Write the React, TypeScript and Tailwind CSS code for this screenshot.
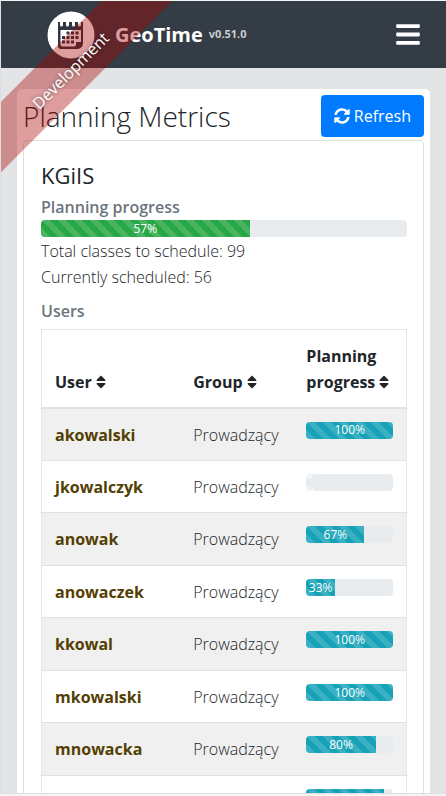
import { FaBars, FaSort, FaSyncAlt } from "react-icons/fa";

type User = { name: string; group: string; progress: number };

const users: User[] = [
  { name: "akowalski", group: "Prowadzący", progress: 100 },
  { name: "jkowalczyk", group: "Prowadzący", progress: 0 },
  { name: "anowak", group: "Prowadzący", progress: 67 },
  { name: "anowaczek", group: "Prowadzący", progress: 33 },
  { name: "kkowal", group: "Prowadzący", progress: 100 },
  { name: "mkowalski", group: "Prowadzący", progress: 100 },
  { name: "mnowacka", group: "Prowadzący", progress: 80 },
  { name: "", group: "", progress: 90 },
];

const stripes =
  "bg-[linear-gradient(45deg,rgba(255,255,255,.15)_25%,transparent_25%,transparent_50%,rgba(255,255,255,.15)_50%,rgba(255,255,255,.15)_75%,transparent_75%,transparent)] bg-[length:16px_16px]";

function Progress({ value, color, label }: { value: number; color: string; label: string }) {
  return (
    <div
      role="progressbar"
      aria-label={label}
      aria-valuenow={value}
      aria-valuemin={0}
      aria-valuemax={100}
      className="flex h-[17px] w-full overflow-hidden rounded bg-[#e9ecef] text-xs leading-[18px] font-normal text-white"
    >
      <div
        className={`flex flex-col justify-center text-center ${color} ${stripes}`}
        style={{ width: `${value}%` }}
      >
        {value === 0 ? (
          <span>
            0<br />%
          </span>
        ) : (
          <span>{value}%</span>
        )}
      </div>
    </div>
  );
}

function SortHeader({ children }: { children: string }) {
  return (
    <button type="button" className="text-left font-bold">
      {children} <FaSort className="inline h-4 w-[10px] align-[-2px]" />
    </button>
  );
}

function CalendarLogo() {
  return (
    <svg viewBox="0 0 48 48" className="h-12 w-12" aria-hidden="true">
      <circle cx="24" cy="24" r="23.5" fill="#fff" />
      <path
        fill="#303642"
        fillRule="evenodd"
        d="M11 11h2v3a1.500 1.500 0 0 0 3 0V11h3v3a1.500 1.500 0 0 0 3 0V11h3v3a1.500 1.500 0 0 0 3 0V11h3v3a1.500 1.500 0 0 0 3 0V11h2v21q0 5-5 6H14q-3 0-3-3zM13.500 19v14.500q0 2 2 2h11.500q2 0 2-2V31h5V19z"
      />
      <path
        fill="#303642"
        d="M19.500 20.500h3v3h-3zM24 20.500h3v3h-3zM28.500 20.500h3v3h-3zM15 25h3v3h-3zM19.500 25h3v3h-3zM24 25h3v3h-3zM28.500 25h3v3h-3zM15 29.500h3v3h-3zM19.500 29.500h3v3h-3zM24 29.500h3v3h-3z"
      />
    </svg>
  );
}

export default function App() {
  return (
    <div className="h-screen bg-[#f4f4f4] pb-[2px] font-['Open_Sans','Noto_Sans',sans-serif] text-[#212529]">
      <div className="relative flex h-full flex-col overflow-hidden border-t border-b border-l border-t-[#f4f6f6] border-b-[#dfdfdf] border-l-[#dcdee0] bg-[#e2e4e6]">
        <header className="flex h-[67px] shrink-0 items-center bg-[#343c45] pr-[26px] pl-[46px] text-white">
          <CalendarLogo />
          <div className="ml-5 flex items-center gap-[6px] font-bold">
            <span className="text-xl">GeoTime</span>
            <span className="text-[11px] text-[#c9cccf]">v0.51.0</span>
          </div>
          <button type="button" aria-label="Menu" className="ml-auto">
            <FaBars className="h-[27px] w-6" />
          </button>
        </header>

        <div className="pointer-events-none absolute top-[43px] left-[-62px] flex h-[50px] w-[260px] -rotate-45 items-center justify-center bg-[#aa0000]/38 pt-1">
          <span className="text-base text-white [text-shadow:0_0_4px_rgba(0,0,0,.5)]">Development</span>
        </div>

        <main className="mx-4 mt-[21px] rounded-[5px] bg-white px-[6px] pt-[6px]">
          <div className="flex items-center justify-between">
            <h1 className="text-[28px] leading-[42px] font-light whitespace-nowrap">Planning Metrics</h1>
            <button
              type="button"
              className="flex h-[42px] items-center gap-1 rounded bg-[#007bff] px-[13px] text-base text-white"
            >
              <FaSyncAlt className="h-4 w-4" />
              Refresh
            </button>
          </div>

          <section className="mt-[3px] rounded border border-[#dfdfdf] pt-[22px] pr-4 pb-4 pl-[17px]">
            <h2 className="text-[22px] leading-6 font-medium">KGiIS</h2>
            <h3 className="mt-[7px] text-base leading-[26px] font-semibold text-[#6c757d]">Planning progress</h3>
            <Progress value={57} color="bg-[#28a745]" label="Planning progress" />
            <p className="mt-px text-base leading-[26px] font-light">Total classes to schedule: 99</p>
            <p className="text-base leading-[26px] font-light">Currently scheduled: 56</p>
            <h3 className="mt-2 text-base leading-[26px] font-semibold text-[#6c757d]">Users</h3>

            <table className="mt-[5px] w-full table-fixed border-collapse border border-[#e5e7e9] text-base leading-[26px]">
              <colgroup>
                <col className="w-[38%]" />
                <col className="w-[31%]" />
                <col className="w-[31%]" />
              </colgroup>
              <thead>
                <tr className="h-[78px] border-b-2 border-[#dee2e6] text-left align-bottom">
                  <th className="px-[13px] pb-3">
                    <SortHeader>User</SortHeader>
                  </th>
                  <th className="px-[13px] pb-3">
                    <SortHeader>Group</SortHeader>
                  </th>
                  <th className="px-[13px] pb-3">
                    <SortHeader>Planning progress</SortHeader>
                  </th>
                </tr>
              </thead>
              <tbody>
                {users.map((u, i) => (
                  <tr
                    key={i}
                    className="border-b border-[#dee2e6] align-top odd:h-[53px] odd:bg-[#f0f0f0] even:h-[52px]"
                  >
                    <td className="px-[13px] pt-[13px]">
                      <a href="#" className="font-bold text-[#533f03]">
                        {u.name}
                      </a>
                    </td>
                    <td className="px-[13px] pt-[13px] font-light">{u.group}</td>
                    <td className="px-[13px] pt-[13px]">
                      <Progress value={u.progress} color="bg-[#17a2b8]" label={`Progress ${u.name}`} />
                    </td>
                  </tr>
                ))}
              </tbody>
            </table>
          </section>
        </main>
      </div>
    </div>
  );
}
